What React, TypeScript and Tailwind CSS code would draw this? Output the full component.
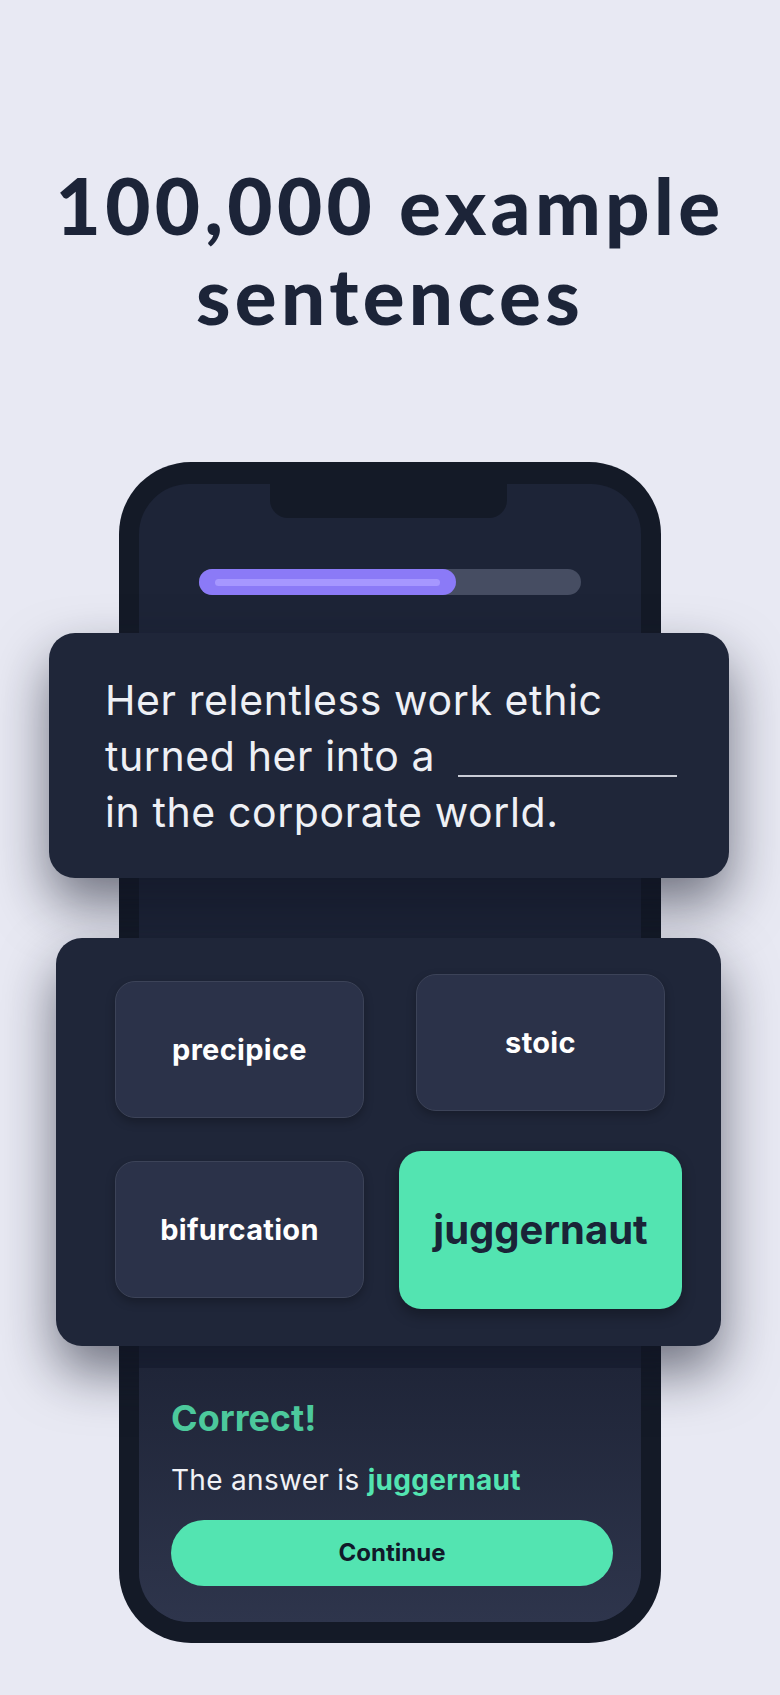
import React from "react";

const options = [
  { word: "precipice", lift: false },
  { word: "stoic", lift: true },
  { word: "bifurcation", lift: false },
];

function OptionButton({ word, lift }: { word: string; lift: boolean }) {
  return (
    <div
      className={`flex items-center justify-center rounded-[20px] border-[1.5px] border-[#3c4358] bg-[#2b3249] shadow-[0_4px_10px_rgba(0,0,0,0.25)] ${
        lift ? "-translate-y-[7px]" : ""
      }`}
    >
      <span className="text-[29px] font-bold tracking-[0.3px] text-white">{word}</span>
    </div>
  );
}

export default function App() {
  return (
    <main
      className="flex min-h-[1695px] w-[780px] flex-col items-center bg-[#e8e9f3] pb-[52px]"
      style={{ fontFamily: "Inter, 'Open Sans', sans-serif" }}
    >
      <h1
        className="pt-[160px] text-center text-[78px] font-black leading-[90px] tracking-[4.4px] text-[#1c2438]"
        style={{ fontFamily: "Lato, 'Liberation Sans', sans-serif" }}
      >
        100,000 example
        <br />
        sentences
      </h1>

      {/* phone */}
      <div className="mt-[122px] w-[542px] rounded-[72px] bg-[#141a27] px-[20px] pb-[21px] pt-[22px]">
        <div className="relative flex flex-col rounded-[50px] bg-[#1d2437] pt-[85px]">
          <div className="absolute left-[131px] top-0 h-[34px] w-[237px] rounded-b-[18px] bg-[#141a27]" />

          {/* progress */}
          <div className="mx-[60px] h-[26px] rounded-full bg-[#464d62]">
            <div className="flex h-full w-[257px] items-center rounded-full bg-[#8b7af7] px-[16px]">
              <div className="h-[7px] w-full rounded-full bg-[#a697ff]" />
            </div>
          </div>

          {/* sentence card */}
          <div className="-ml-[90px] -mr-[88px] mt-[38px] flex h-[245px] items-center rounded-[26px] bg-[#1f2639] pl-[56px] pr-[40px] shadow-[0_26px_54px_rgba(14,18,34,0.55)]">
            <p className="whitespace-nowrap text-[41px] leading-[56px] tracking-[0.6px] text-[#eef0f5]">
              Her relentless work ethic
              <br />
              turned her into a
              <span className="ml-[23px] inline-block w-[219px] border-b-2 border-[#c9ccd6] align-[-6px]" />
              <br />
              in the corporate world.
            </p>
          </div>

          {/* answers */}
          <div className="-ml-[83px] -mr-[80px] mt-[60px] grid h-[408px] grid-cols-[249px_249px] grid-rows-[137px_137px] gap-x-[52px] gap-y-[43px] rounded-[26px] bg-[#1f2639] pl-[59px] pt-[43px] shadow-[0_26px_54px_rgba(14,18,34,0.55)]">
            {options.map((o) => (
              <OptionButton key={o.word} word={o.word} lift={o.lift} />
            ))}
            <div className="-mx-[17px] -my-[10px] flex h-[158px] w-[283px] items-center justify-center rounded-[22px] bg-[#53e4b1] shadow-[0_6px_14px_rgba(0,0,0,0.3)]">
              <span className="text-[40px] font-bold text-[#1a2437]">juggernaut</span>
            </div>
          </div>

          <div className="h-[22px]" />

          {/* result sheet */}
          <div className="flex flex-col rounded-b-[50px] bg-gradient-to-b from-[#1f2538] to-[#2e354c] px-[32px] pb-[36px] pt-[32px]">
            <p className="text-[36px] font-bold leading-none text-[#4cc99c]">Correct!</p>
            <p className="mt-[30px] text-[28px] leading-none tracking-[0.3px] text-[#f1f2f6]">
              The answer is <span className="font-bold text-[#53e4b1]">juggernaut</span>
            </p>
            <button className="mr-[-4px] mt-[26px] h-[66px] rounded-full bg-[#53e4b1] text-[24px] font-bold text-[#111a2a]">
              Continue
            </button>
          </div>
        </div>
      </div>
    </main>
  );
}
